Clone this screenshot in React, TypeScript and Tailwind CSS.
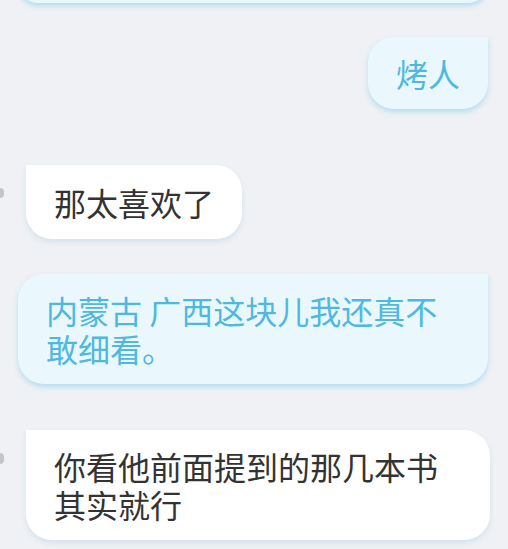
export default function App() {
  const font = "font-['Noto_Sans_CJK_SC','Noto_Sans',sans-serif]";
  const mine =
    "bg-[#eaf8fe] text-[#4fb8e1] rounded-[26px] rounded-tr-none shadow-[0_3px_5px_rgba(110,200,240,0.45)]";
  const theirs =
    "bg-white text-[#333333] rounded-[26px] rounded-tl-none shadow-[0_3px_5px_rgba(150,190,215,0.28)]";

  return (
    <div className={`w-[508px] h-[549px] overflow-hidden bg-[#eff1f4] flex flex-col ${font}`}>
      {/* cut-off bubble at the top */}
      <div className={`ml-[18px] w-[470px] h-[40px] mt-[-37px] ${mine}`} />

      <div className="mt-[34px] flex justify-end pr-[20px]">
        <div className={`px-7 py-[17px] text-[32px] leading-[38px] ${mine}`}>烤人</div>
      </div>

      <div className="mt-[56px] flex items-start">
        <div className="mt-[23px] w-[4px] h-[10px] bg-[#c2c6ca] rounded-r-sm" />
        <div className={`ml-[22px] px-7 py-[18px] text-[32px] leading-[38px] ${theirs}`}>那太喜欢了</div>
      </div>

      <div className="mt-[35px] flex justify-end pr-[20px]">
        <div className={`w-[470px] px-7 py-[17px] text-[32px] leading-[38px] ${mine}`}>
          内蒙古 广西这块儿我还真不敢细看。
        </div>
      </div>

      <div className="mt-[46px] flex items-start">
        <div className="mt-[23px] w-[4px] h-[11px] bg-[#c2c6ca] rounded-r-sm" />
        <div className={`ml-[22px] w-[464px] px-7 py-[17px] text-[32px] leading-[38px] ${theirs}`}>
          你看他前面提到的那几本书其实就行
        </div>
      </div>
    </div>
  );
}
